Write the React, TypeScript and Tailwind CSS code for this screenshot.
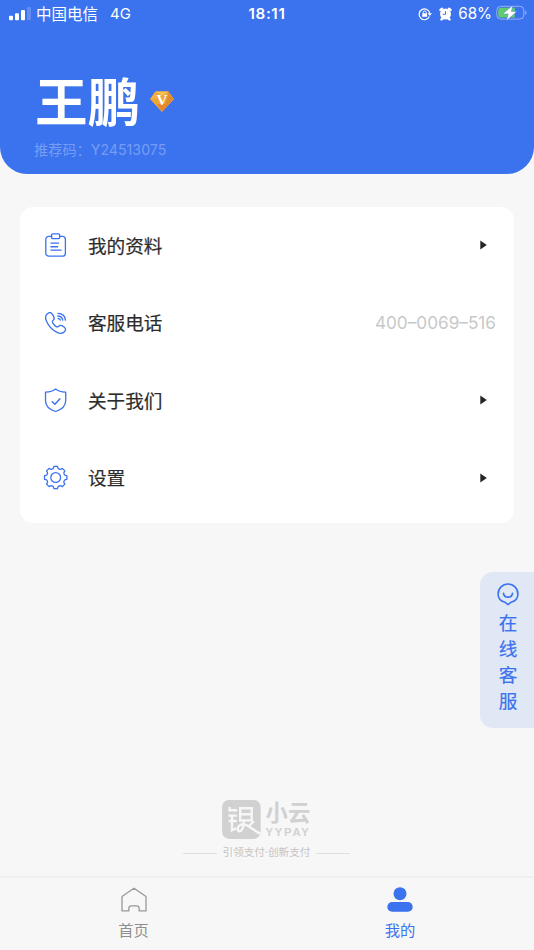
import type { ReactNode } from "react";

const BLUE = "#3b72ee";

function gearPath(cx: number, cy: number) {
  const points: string[] = [];
  for (let i = 0; i < 8; i++) {
    const mid = (i * Math.PI) / 4;
    const corners = [
      [9.2, -0.3],
      [9.9, -0.22],
      [11.3, -0.16],
      [11.3, 0.16],
      [9.9, 0.22],
      [9.2, 0.3],
    ];
    for (const [r, a] of corners) {
      points.push(`${(cx + r * Math.cos(mid + a)).toFixed(2)} ${(cy + r * Math.sin(mid + a)).toFixed(2)}`);
    }
  }
  return `M${points.join("L")}Z`;
}

function LineIcon({ children }: { children: ReactNode }) {
  return (
    <svg
      width="26"
      height="26"
      viewBox="0.4 -0.3 26 26"
      fill="none"
      stroke={BLUE}
      strokeWidth="1.3"
      strokeLinecap="round"
      strokeLinejoin="round"
      className="shrink-0"
    >
      {children}
    </svg>
  );
}

const icons = {
  profile: (
    <LineIcon>
      <path d="M9 4.1H6.2A3 3 0 0 0 3.2 7.1V20.9A3 3 0 0 0 6.2 23.9H19.8A3 3 0 0 0 22.8 20.9V7.1A3 3 0 0 0 19.8 4.1H17" />
      <rect x="9" y="1.5" width="8" height="4.9" rx="1" />
      <path d="M8.3 10.8H16M8.3 14.4H15M8.3 17.8H18.5" strokeWidth="1.4" />
    </LineIcon>
  ),
  phone: (
    <LineIcon>
      <path d="M5.2 3.1C6.7 1.8 8.6 2.3 9.8 4L11 6C12 7.7 11.7 9.2 10.4 10.2C9.3 11.1 9.3 11.6 10.2 12.9C11.2 14.4 12.2 15.4 13.6 16.3C14.7 17 15.2 16.8 16 16C17.1 14.8 18.7 14.8 20.2 15.8L21.7 16.9C23.3 18.2 23.2 20 21.8 21.4C20 23.2 17.3 23.5 14.5 22.1C9.7 19.7 5.8 15.4 3.7 10.4C2.4 7.3 2.8 4.9 5.2 3.1Z" />
      <path d="M15.4 3.1C19.7 3.3 22.5 5.8 22.8 9.8M15.3 5.7C18 5.9 19.7 7.3 20.1 9.7M15.6 8.2C16.8 8.4 17.4 8.8 17.7 9.7" strokeWidth="1.4" />
    </LineIcon>
  ),
  shield: (
    <LineIcon>
      <path d="M13 1.8C10.5 4 7.3 4.8 2.9 4.9V13.3C2.9 18.8 6.6 22.3 13 24.2C19.4 22.3 23.1 18.8 23.1 13.3V4.9C18.7 4.8 15.5 4 13 1.8Z" />
      <path d="M9.6 14.4L12.3 17L17.2 11.6" strokeWidth="1.5" />
    </LineIcon>
  ),
  gear: (
    <LineIcon>
      <path d={gearPath(13.1, 12.2)} />
      <circle cx="13.1" cy="12.2" r="4.9" />
    </LineIcon>
  ),
};

function StatusBar() {
  return (
    <div className="grid h-7 grid-cols-3 items-center text-[15.5px] text-white">
      <div className="flex items-center pl-[9px] leading-7">
        <svg width="22" height="14" viewBox="0 0 22 14" fill="white" className="-mt-px mr-[5px]">
          <rect x="0" y="8.7" width="4" height="4.5" rx="1" />
          <rect x="6" y="6.2" width="4" height="7" rx="1" />
          <rect x="12" y="3" width="4" height="10.2" rx="1" />
          <rect x="18" y="0" width="4" height="13.2" rx="1" opacity=".2" />
        </svg>
        <span className="-mb-0.5 whitespace-nowrap">中国电信</span>
        <span className="ml-3 text-[15px]">4G</span>
      </div>
      <div className="text-center text-[15.2px] font-semibold tracking-[.6px]">18:11</div>
      <div className="flex items-center justify-end pr-[6px]">
        <svg width="14" height="14" viewBox="0 0 14 14" fill="none" stroke="white" strokeWidth="1.2">
          <path d="M11.4 9.6A5.4 5.4 0 1 1 11.8 6.3" />
          <path d="M9.6 6.2H14L11.8 9Z" fill="white" stroke="none" />
          <rect x="4.2" y="6.3" width="4.9" height="3.5" fill="white" stroke="none" />
          <path d="M5.2 6.5V5.4A1.45 1.45 0 0 1 8.1 5.4V6.5" strokeWidth="1" />
        </svg>
        <svg width="13" height="14" viewBox="0 0 13 14" className="ml-[7px]">
          <g stroke="white" strokeWidth="2.4" strokeLinecap="round">
            <path d="M1.5 2.9L3 1.7M11.5 2.9L10 1.7M2.5 12.4L4 11M10.5 12.4L9 11" />
          </g>
          <circle cx="6.5" cy="7.1" r="5.5" fill="white" />
          <path d="M6.5 4.2V7.3H3.8" fill="none" stroke={BLUE} strokeWidth="1" />
        </svg>
        <span className="ml-1.5 pt-px text-[15.2px]">68%</span>
        <svg width="32" height="16" viewBox="0 0 32 16" className="-mt-px ml-1">
          <rect x=".8" y="1.3" width="27" height="12.8" rx="4" fill="none" stroke="white" strokeOpacity=".45" />
          <path d="M4.5 2.8H18.8V12.6H4.5A2.2 2.2 0 0 1 2.3 10.4V5A2.2 2.2 0 0 1 4.5 2.8Z" fill="#63cb6a" />
          <path d="M29.2 5.5V10C30.9 9.2 30.9 6.3 29.2 5.5Z" fill="white" opacity=".5" />
          <path d="M16.8 .2L6.8 8.9H12.2L10.6 15.6L20.8 6.6H15.3Z" fill="white" stroke={BLUE} strokeWidth=".4" />
        </svg>
      </div>
    </div>
  );
}

function VipBadge() {
  return (
    <svg width="24" height="22" viewBox="0 0 24 22">
      <path d="M5.6 .8H18.4L23.5 8.1L12 20.5L.5 8.1Z" fill="#eda63a" stroke="#eda63a" strokeLinejoin="round" />
      <path d="M5.6 .8H18.4L12 4.4Z" fill="#f5c155" />
      <path d="M.5 8.1L5.6 .8L7 8.1Z" fill="#f1b145" />
      <path d="M17 8.1L18.4 .8L23.5 8.1L12 20.5Z" fill="#df8b2f" />
      <path d="M7 13L12 20.5L17 13Z" fill="#e7862c" />
      <text x="12" y="14.3" textAnchor="middle" fill="white" fontSize="15" fontWeight="700" className="font-['Liberation_Serif',serif]">
        V
      </text>
    </svg>
  );
}

function MenuRow({ icon, label, value }: { icon: ReactNode; label: string; value?: string }) {
  return (
    <div className="flex h-[77.5px] items-center pl-[23px] pr-[18px]">
      {icon}
      <span className="ml-[19px] flex-1 pt-[3px] text-[18.6px] text-[#2c2c2c] [-webkit-text-stroke:.2px_#2c2c2c]">{label}</span>
      {value ? (
        <span className="pt-px text-[17.2px] text-[#c8c8c8]">{value}</span>
      ) : (
        <svg width="7" height="10" viewBox="0 0 7 10" className="mr-[9px]">
          <path d="M.3 .5L6.8 5L.3 9.5Z" fill="#252525" />
        </svg>
      )}
    </div>
  );
}

function SupportTab() {
  return (
    <div className="absolute right-0 top-[572px] flex h-[156px] w-[54px] flex-col items-center rounded-l-[13px] bg-[#e1e8f5] pl-0.5 pt-[11px] text-[#3b72ee]">
      <svg width="22" height="23" viewBox="0 0 22 23" fill="none" stroke={BLUE} strokeWidth="1.6" strokeLinecap="round" strokeLinejoin="round">
        <path d="M11 21.6L7.8 19.2C3.8 18 1.1 14.8 1.1 10.9A9.9 9.9 0 0 1 20.9 10.9C20.9 14.8 18.2 18 14.2 19.2Z" />
        <path d="M6.5 10.3C7.2 15.4 14.8 15.4 15.5 10.3" />
      </svg>
      <div className="mt-1 flex flex-col text-[18.6px] leading-[26px] [-webkit-text-stroke:.2px_#3b72ee]">
        {["在", "线", "客", "服"].map((c) => (
          <span key={c}>{c}</span>
        ))}
      </div>
    </div>
  );
}

function Brand() {
  return (
    <div className="flex flex-col items-center pr-px text-[#d1d1d1]">
      <div className="flex h-10 items-center">
        <svg width="40" height="40" viewBox="0.6 0.6 40 40">
          <rect x=".7" y=".5" width="38.6" height="39" rx="7" fill="#d1d1d1" />
          <g fill="none" stroke="#f7f7f7" strokeWidth="2.4">
            <path d="M8.2 7.5V10.9H15.8M7 16.2H15.4M7.4 21.6H15.4M10.6 16V30.8L15 29" />
            <path d="M18.8 22.4V8.8H30.3V21H18.8M18.8 14.9H30.3" />
            <path d="M22.6 21C22.3 28 20.6 31.8 18.1 31.8C15.6 31.8 15.6 27.4 18.8 25.6C24.5 22.6 29.5 29.4 38.8 34.2" />
            <path d="M32.5 21.8L27.5 26.6" />
          </g>
        </svg>
        <div className="ml-1 flex w-[46px] flex-col">
          <span className="text-[22.4px] font-bold leading-[22px]">小云</span>
          <span className="mt-[3px] font-['Liberation_Sans',sans-serif] text-[11.2px] font-bold leading-[11px] tracking-[1.8px]">YYPAY</span>
        </div>
      </div>
      <div className="mt-[5px] flex items-center gap-[6px] text-[10.6px] leading-4">
        <i className="h-px w-[34px] bg-[#e0e0e0]" />
        <span className="text-[#c4c4c4]">引领支付·创新支付</span>
        <i className="h-px w-[34px] bg-[#e0e0e0]" />
      </div>
    </div>
  );
}

function TabBar() {
  return (
    <nav className="grid h-[74px] grid-cols-2 border-t-2 border-[#f0f0f0] text-[15.3px] leading-6">
      <div className="flex flex-col items-center pt-[9px] text-[#8f8f8f]">
        <svg width="26" height="26" viewBox="0 0 26 26" fill="none" stroke="#999" strokeWidth="1.3" strokeLinejoin="round">
          <path d="M1 9.5L13 1.2L25 9.5V23.9H18.2V21.5A2.7 2.7 0 0 0 15.5 18.8H10.5A2.7 2.7 0 0 0 7.8 21.5V23.9H1Z" />
        </svg>
        <span className="mt-1.5">首页</span>
      </div>
      <div className="flex flex-col items-center pt-[9px] pr-px text-[#3b72ee]">
        <svg width="26" height="26" viewBox="0 0 26 26" fill={BLUE}>
          <circle cx="13" cy="6.7" r="6.5" />
          <rect x=".3" y="15" width="25.4" height="9.8" rx="4.9" />
        </svg>
        <span className="mt-1.5">我的</span>
      </div>
    </nav>
  );
}

export default function App() {
  return (
    <div className="relative flex h-[950px] w-[534px] flex-col overflow-hidden bg-[#f7f7f7] font-[Inter,'Noto_Sans_CJK_SC',sans-serif]">
      <header className="h-[174px] rounded-b-[27px] bg-[#3b72ee]">
        <StatusBar />
        <div className="mt-[37px] flex h-[74px] items-center pl-[35px]">
          <h1 className="pt-px text-[52.6px] font-bold leading-[74px] text-white">王鹏</h1>
          <div className="ml-[10px]">
            <VipBadge />
          </div>
        </div>
        <div className="pl-[34px] text-[14.2px] leading-[22px] text-[#779df3]">推荐码：Y24513075</div>
      </header>

      <main className="mx-5 mt-[32.5px] h-[316px] shrink-0 rounded-[13px] bg-white">
        <MenuRow icon={icons.profile} label="我的资料" />
        <MenuRow icon={icons.phone} label="客服电话" value="400–0069–516" />
        <MenuRow icon={icons.shield} label="关于我们" />
        <MenuRow icon={icons.gear} label="设置" />
      </main>

      <div className="mb-[15px] mt-auto">
        <Brand />
      </div>
      <TabBar />
      <SupportTab />
    </div>
  );
}
